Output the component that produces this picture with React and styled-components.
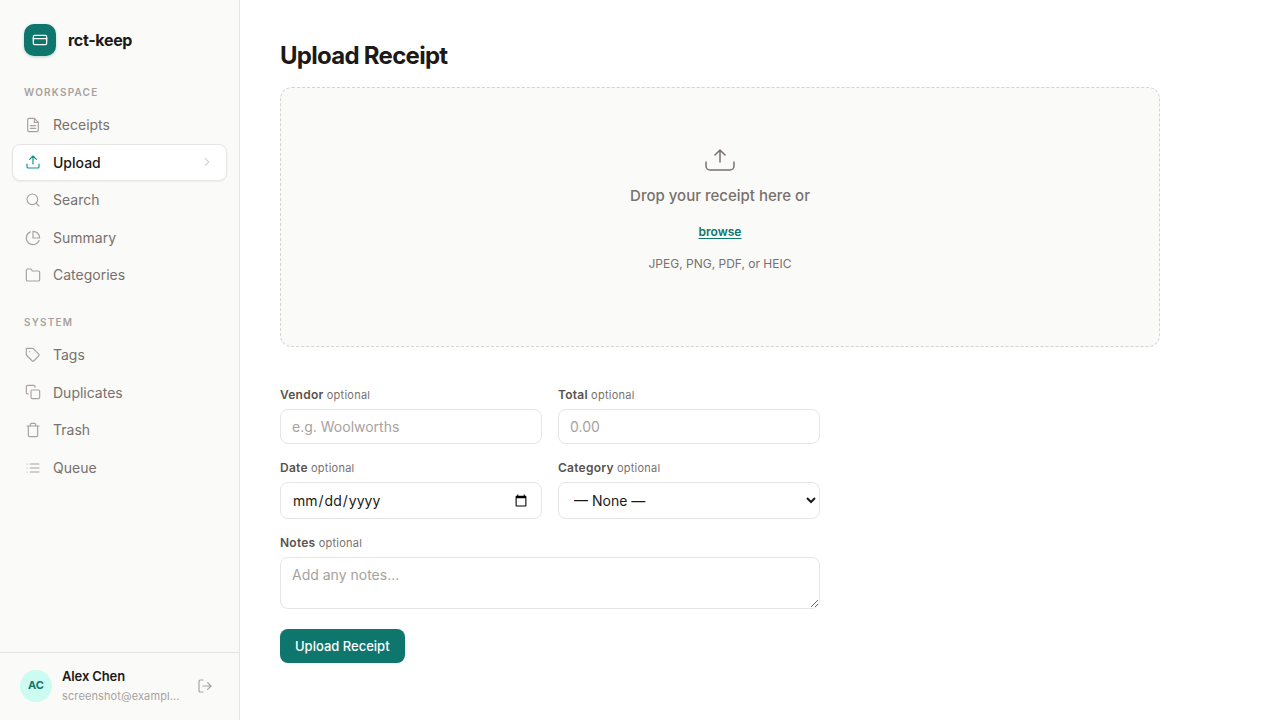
import { useState } from "react";
import styled, { createGlobalStyle } from "styled-components";

const GlobalStyle = createGlobalStyle`
  * { box-sizing: border-box; }
  body {
    margin: 0;
    background: #fff;
    color: #1c1917;
    font-family: Inter, "Liberation Sans", sans-serif;
    font-size: 14px;
    line-height: 1.4;
  }
  button, input, select, textarea { font-family: inherit; }
`;

const Layout = styled.div`
  display: flex;
  min-height: 100vh;
`;
const Sidebar = styled.aside`
  display: flex;
  flex-direction: column;
  flex: 0 0 240px;
  min-width: 0;
  height: 100vh;
  position: sticky;
  top: 0;
  background: #fafaf9;
  border-right: 1px solid #e7e5e4;
`;
const Brand = styled.div`
  display: flex;
  align-items: center;
  gap: 12px;
  padding: 24px 24px 16px;
`;
const Logo = styled.div`
  display: flex;
  align-items: center;
  justify-content: center;
  width: 32px;
  height: 32px;
  border-radius: 10px;
  background: #0f766e;
  color: #fff;
  box-shadow: 0 1px 3px rgba(15, 118, 110, 0.3);
`;
const BrandName = styled.span`
  font-size: 16px;
  line-height: 23px;
  font-weight: 700;
  letter-spacing: -0.02em;
`;
const Nav = styled.nav`
  flex: 1;
  padding: 0 12px;
`;
const NavGroup = styled.section`
  padding-top: 12px;
  margin-bottom: 8px;
`;
const NavHeading = styled.h2`
  margin: 0 0 6px;
  padding: 0 12px;
  font-size: 10px;
  line-height: 16px;
  font-weight: 600;
  letter-spacing: 0.12em;
  text-transform: uppercase;
  color: #a8a29e;
`;
const NavList = styled.ul`
  margin: 0;
  padding: 0;
  list-style: none;
`;
const NavLink = styled.a`
  display: flex;
  align-items: center;
  gap: 12px;
  padding: 8px 12px;
  border: 1px solid ${(props) => (props.$active ? "#e7e5e4" : "transparent")};
  border-radius: 8px;
  background: ${(props) => (props.$active ? "#fff" : "transparent")};
  box-shadow: ${(props) => (props.$active ? "0 1px 2px rgba(0, 0, 0, 0.05)" : "none")};
  color: ${(props) => (props.$active ? "#1c1917" : "#78716c")};
  font-weight: ${(props) => (props.$active ? 500 : 400)};
  text-decoration: none;

  svg { color: ${(props) => (props.$active ? "#0d9488" : "#a8a29e")}; }
  svg:last-child { margin-left: auto; color: #d6d3d1; }
`;
const UserBar = styled.div`
  display: flex;
  align-items: center;
  gap: 10px;
  padding: 15px 20px 16px;
  border-top: 1px solid #e7e5e4;
`;
const Avatar = styled.div`
  display: flex;
  align-items: center;
  justify-content: center;
  flex: 0 0 32px;
  height: 32px;
  border-radius: 50%;
  background: #ccfbf1;
  color: #0f766e;
  font-size: 11px;
  font-weight: 700;
`;
const UserText = styled.div`
  flex: 1;
  min-width: 0;
`;
const UserName = styled.div`
  font-size: 13px;
  line-height: 16px;
  font-weight: 600;
  letter-spacing: -0.01em;
`;
const UserEmail = styled.div`
  overflow: hidden;
  margin-top: 4px;
  font-size: 11px;
  line-height: 16px;
  letter-spacing: 0.01em;
  text-overflow: ellipsis;
  white-space: nowrap;
  color: #a8a29e;
`;
const LogoutButton = styled.button`
  display: flex;
  padding: 6px;
  border: 0;
  background: none;
  color: #a8a29e;
  cursor: pointer;
`;

const Main = styled.main`
  flex: 1;
  min-width: 0;
  padding: 40px;
`;
const Content = styled.div`
  max-width: 880px;
`;
const Title = styled.h1`
  margin: 0 0 16px;
  font-size: 24px;
  line-height: 31px;
  font-weight: 700;
  letter-spacing: -0.03em;
`;
const DropZone = styled.div`
  display: flex;
  flex-direction: column;
  align-items: center;
  justify-content: center;
  min-height: 260px;
  padding: 48px 24px 66px;
  border: 1px dashed #d6d3d1;
  border-radius: 12px;
  background: #fafaf9;
  color: #78716c;
`;
const DropText = styled.p`
  margin: 8px 0 16px;
  font-size: 15px;
  line-height: 24px;
  font-weight: 500;
`;
const BrowseButton = styled.button`
  padding: 0;
  border: 0;
  background: none;
  color: #0f766e;
  font-size: 12px;
  line-height: 16px;
  font-weight: 600;
  text-decoration: underline;
  text-underline-offset: 2px;
  cursor: pointer;
`;
const DropHint = styled.p`
  margin: 16px 0 0;
  font-size: 12px;
  line-height: 16px;
`;
const Form = styled.form`
  display: grid;
  grid-template-columns: 1fr 1fr;
  gap: 16px;
  max-width: 540px;
  margin-top: 40px;
`;
const Field = styled.div`
  display: flex;
  flex-direction: column;
  gap: 6px;
  grid-column: ${(props) => (props.$wide ? "1 / -1" : "auto")};
`;
const Label = styled.label`
  font-size: 12px;
  line-height: 16px;
  font-weight: 600;
  letter-spacing: 0.02em;
  color: #57534e;

  span {
    font-size: 11px;
    font-weight: 400;
    color: #78716c;
  }
`;
const control = `
  width: 100%;
  border: 1px solid #e7e5e4;
  border-radius: 8px;
  background: #fff;
  color: #1c1917;
  font-size: 14px;

  &::placeholder { color: #a8a29e; }
`;
const Input = styled.input`
  ${control}
  height: ${(props) => (props.type === "date" ? 37 : 35)}px;
  padding: 8px 11px;
`;
const Select = styled.select`
  ${control}
  height: 37px;
  padding: 8px 11px;
`;
const TextArea = styled.textarea`
  ${control}
  display: block;
  height: 52px;
  padding: 8px 11px;
  resize: vertical;
`;
const SubmitButton = styled.button`
  justify-self: start;
  margin-top: 4px;
  height: 34px;
  padding: 0 15px;
  border: 0;
  border-radius: 8px;
  background: #0f766e;
  color: #fff;
  font-size: 13px;
  font-weight: 500;
  cursor: pointer;
`;

const icons = {
  card: <><rect x="2" y="5" width="20" height="14" rx="2" /><path d="M2 10h20" /></>,
  file: <><path d="M14 2H6a2 2 0 0 0-2 2v16a2 2 0 0 0 2 2h12a2 2 0 0 0 2-2V8z" /><path d="M14 2v6h6M16 13H8M16 17H8" /></>,
  upload: <><path d="M21 15v4a2 2 0 0 1-2 2H5a2 2 0 0 1-2-2v-4" /><path d="M17 8l-5-5-5 5M12 3v12" /></>,
  search: <><circle cx="11" cy="11" r="8" /><path d="M21 21l-4.35-4.35" /></>,
  pie: <><path d="M21.21 15.89A10 10 0 1 1 8 2.83" /><path d="M22 12A10 10 0 0 0 12 2v10z" /></>,
  folder: <path d="M22 19a2 2 0 0 1-2 2H4a2 2 0 0 1-2-2V5a2 2 0 0 1 2-2h5l2 3h9a2 2 0 0 1 2 2z" />,
  tag: <><path d="M20.59 13.41l-7.17 7.17a2 2 0 0 1-2.83 0L2 12V2h10l8.59 8.59a2 2 0 0 1 0 2.82z" /><path d="M7 7h.01" /></>,
  copy: <><rect x="9" y="9" width="13" height="13" rx="2" /><path d="M5 15H4a2 2 0 0 1-2-2V4a2 2 0 0 1 2-2h9a2 2 0 0 1 2 2v1" /></>,
  trash: <><path d="M3 6h18" /><path d="M19 6v14a2 2 0 0 1-2 2H7a2 2 0 0 1-2-2V6M8 6V4a2 2 0 0 1 2-2h4a2 2 0 0 1 2 2v2" /></>,
  list: <path d="M8 6h13M8 12h13M8 18h13M3 6h.01M3 12h.01M3 18h.01" />,
  chevron: <path d="M9 18l6-6-6-6" />,
  logout: <><path d="M9 21H5a2 2 0 0 1-2-2V5a2 2 0 0 1 2-2h4" /><path d="M16 17l5-5-5-5M21 12H9" /></>,
};

const Icon = ({ name, size = 16, weight = 1.5 }) => (
  <svg width={size} height={size} viewBox="0 0 24 24" fill="none" stroke="currentColor"
    strokeWidth={weight} strokeLinecap="round" strokeLinejoin="round" aria-hidden="true">
    {icons[name]}
  </svg>
);

const groups = [
  {
    title: "Workspace",
    items: [
      ["Receipts", "file"],
      ["Upload", "upload"],
      ["Search", "search"],
      ["Summary", "pie"],
      ["Categories", "folder"],
    ],
  },
  {
    title: "System",
    items: [
      ["Tags", "tag"],
      ["Duplicates", "copy"],
      ["Trash", "trash"],
      ["Queue", "list"],
    ],
  },
];

const App = () => {
  const [page, setPage] = useState("Upload");

  return (
    <Layout>
      <GlobalStyle />
      <Sidebar>
        <Brand>
          <Logo><Icon name="card" weight={2} /></Logo>
          <BrandName>rct-keep</BrandName>
        </Brand>
        <Nav>
          {groups.map((group) => (
            <NavGroup key={group.title}>
              <NavHeading>{group.title}</NavHeading>
              <NavList>
                {group.items.map(([label, icon]) => (
                  <li key={label}>
                    <NavLink href={"#" + label.toLowerCase()} $active={page === label} onClick={() => setPage(label)}>
                      <Icon name={icon} weight={1.75} />
                      <span>{label}</span>
                      {page === label && <Icon name="chevron" size={14} weight={2} />}
                    </NavLink>
                  </li>
                ))}
              </NavList>
            </NavGroup>
          ))}
        </Nav>
        <UserBar>
          <Avatar>AC</Avatar>
          <UserText>
            <UserName>Alex Chen</UserName>
            <UserEmail>screenshot@exampl...</UserEmail>
          </UserText>
          <LogoutButton type="button" aria-label="Log out"><Icon name="logout" weight={1.75} /></LogoutButton>
        </UserBar>
      </Sidebar>
      <Main>
        <Content>
          <Title>Upload Receipt</Title>
          <DropZone>
            <svg width="32" height="32" viewBox="0 0 32 32" fill="none" stroke="currentColor"
              strokeWidth="1.5" strokeLinecap="round" strokeLinejoin="round" aria-hidden="true">
              <path d="M2 18v4a4 4 0 0 0 4 4h20a4 4 0 0 0 4-4v-4" />
              <path d="M16 18V6M11 11l5-5 5 5" />
            </svg>
            <DropText>Drop your receipt here or</DropText>
            <BrowseButton type="button">browse</BrowseButton>
            <DropHint>JPEG, PNG, PDF, or HEIC</DropHint>
          </DropZone>
          <Form onSubmit={(e) => e.preventDefault()}>
            <Field>
              <Label htmlFor="vendor">Vendor <span>optional</span></Label>
              <Input id="vendor" type="text" placeholder="e.g. Woolworths" />
            </Field>
            <Field>
              <Label htmlFor="total">Total <span>optional</span></Label>
              <Input id="total" type="text" inputMode="decimal" placeholder="0.00" />
            </Field>
            <Field>
              <Label htmlFor="date">Date <span>optional</span></Label>
              <Input id="date" type="date" />
            </Field>
            <Field>
              <Label htmlFor="category">Category <span>optional</span></Label>
              <Select id="category">
                <option>— None —</option>
              </Select>
            </Field>
            <Field $wide>
              <Label htmlFor="notes">Notes <span>optional</span></Label>
              <TextArea id="notes" placeholder="Add any notes..." />
            </Field>
            <SubmitButton type="submit">Upload Receipt</SubmitButton>
          </Form>
        </Content>
      </Main>
    </Layout>
  );
};

export default App;
